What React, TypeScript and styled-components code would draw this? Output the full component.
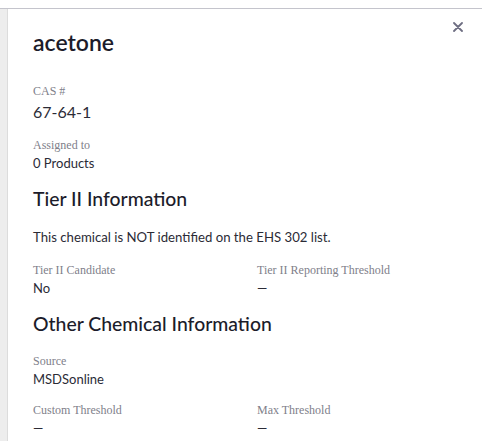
import React from "react"
import styled, { createGlobalStyle } from "styled-components"

const GlobalStyle = createGlobalStyle`
    html, body {
        margin: 0;
        padding: 0;
        background: #ffffff;
    }
`

const Page = styled.div`
    padding-top: 8px;
    height: 441px;
    box-sizing: border-box;
    overflow: hidden;
    background: #ffffff;
`

const Frame = styled.div`
    display: flex;
    height: 100%;
    border-top: 1px solid #c4c4cc;
`

const Strip = styled.div`
    width: 7px;
    background: #ededed;
    border-right: 1px solid #dcdcdc;
`

const Panel = styled.div`
    position: relative;
    flex: 1;
    padding: 18px 25px 0 25px;
    font-family: Lato, "Noto Sans", sans-serif;
    color: #2b2b36;
`

const Close = styled.button`
    position: absolute;
    top: 10px;
    right: 16px;
    width: 16px;
    height: 16px;
    padding: 0;
    border: none;
    background: none;
    display: flex;
    align-items: center;
    justify-content: center;
    cursor: pointer;
`

const Title = styled.h1`
    margin: 0 0 26px 0;
    font-size: 23px;
    font-weight: 600;
    line-height: 30px;
    color: #1c1c2a;
`

const Heading = styled.h2`
    margin: 0 0 16px 0;
    font-size: 19.4px;
    font-weight: 500;
    line-height: 26px;
    color: #1c1c2a;
`

const Note = styled.p`
    margin: 0 0 16px 0;
    font-size: 13.2px;
    line-height: 18px;
    color: #2b2b36;
`

const Row = styled.div`
    display: grid;
    grid-template-columns: 224px 1fr;
    margin-bottom: 14px;
`

const Field = styled.div<{ gap?: number }>`
    margin-bottom: ${({ gap }) => gap ?? 0}px;
`

const Label = styled.div`
    font-family: "Liberation Serif", "DejaVu Serif", serif;
    font-size: 12px;
    line-height: 16px;
    color: #80808a;
`

const Value = styled.div<{ big?: boolean }>`
    font-size: ${({ big }) => (big ? 16 : 13)}px;
    line-height: ${({ big }) => (big ? 22 : 18)}px;
    margin-top: ${({ big }) => (big ? 2 : 1)}px;
    color: #2b2b36;
`

const CloseIcon = () => (
    <svg width="10" height="10" viewBox="0 0 10 10">
        <path d="M1 1 L9 9 M9 1 L1 9" stroke="#6e6e82" strokeWidth="1.8" strokeLinecap="round" />
    </svg>
)

const App = (): JSX.Element => (
    <Page>
        <GlobalStyle />
        <Frame>
            <Strip />
            <Panel>
                <Close aria-label="Close">
                    <CloseIcon />
                </Close>
                <Title>acetone</Title>
                <Field gap={14}>
                    <Label>CAS #</Label>
                    <Value big>67-64-1</Value>
                </Field>
                <Field gap={14}>
                    <Label>Assigned to</Label>
                    <Value>0 Products</Value>
                </Field>
                <Heading>Tier II Information</Heading>
                <Note>This chemical is NOT identified on the EHS 302 list.</Note>
                <Row>
                    <Field>
                        <Label>Tier II Candidate</Label>
                        <Value>No</Value>
                    </Field>
                    <Field>
                        <Label>Tier II Reporting Threshold</Label>
                        <Value>—</Value>
                    </Field>
                </Row>
                <Heading>Other Chemical Information</Heading>
                <Field gap={14}>
                    <Label>Source</Label>
                    <Value>MSDSonline</Value>
                </Field>
                <Row>
                    <Field>
                        <Label>Custom Threshold</Label>
                        <Value>—</Value>
                    </Field>
                    <Field>
                        <Label>Max Threshold</Label>
                        <Value>—</Value>
                    </Field>
                </Row>
            </Panel>
        </Frame>
    </Page>
)

export default App
